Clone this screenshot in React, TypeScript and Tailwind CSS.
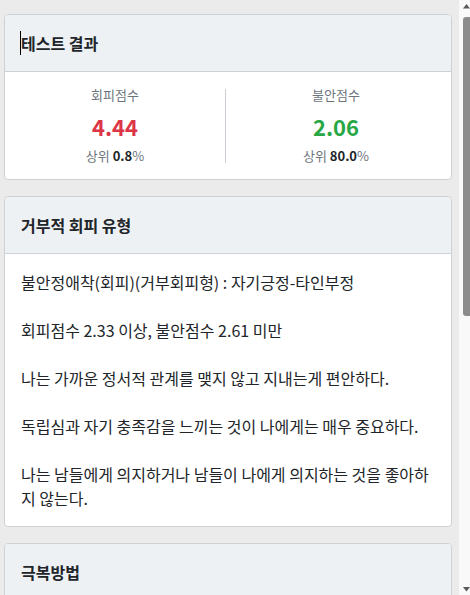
import React from "react";

const font = { fontFamily: '"Noto Sans CJK KR", "Noto Sans", sans-serif' };

function Card({ title, children, caret = false }: { title: string; children: React.ReactNode; caret?: boolean }) {
  return (
    <div className="ml-[4px] mr-[3px] rounded-[4px] border border-[#cdd1d6] bg-white overflow-hidden">
      <div className="bg-[#eef1f4] border-b border-[#cdd1d6] px-4 py-4">
        <h2 className="text-[16px] leading-6 font-bold text-[#212529] flex items-center">
          {caret && <span className="inline-block w-px h-6 bg-black -ml-px" />}
          <span>{title}</span>
        </h2>
      </div>
      {children}
    </div>
  );
}

function Stat({ label, value, color, rank }: { label: string; value: string; color: string; rank: string }) {
  return (
    <div className="flex flex-col items-center">
      <div className="text-[13px] leading-5 text-[#6c757d]">{label}</div>
      <div className={`text-[22px] leading-7 font-bold mt-[7px] ${color}`}>{value}</div>
      <div className="text-[13px] leading-5 text-[#6c757d] mt-[6px]">
        상위 <span className="font-bold text-[#212529]">{rank}</span>%
      </div>
    </div>
  );
}

function Scrollbar() {
  return (
    <div className="w-[15px] shrink-0 h-full">
      <svg width="15" height="595" viewBox="0 0 15 595">
        <rect x="4" y="0" width="11" height="595" fill="#f9f9f9" />
        <polygon points="8,8.5 11.5,4 15,8.5" fill="#5a5a5a" />
        <rect x="8" y="17" width="12" height="299" rx="3" fill="#8c8c8c" />
        <polygon points="8,587 11.5,591.5 15,587" fill="#5a5a5a" />
      </svg>
    </div>
  );
}

export default function App() {
  return (
    <div className="h-screen w-full flex overflow-hidden bg-[#ebebeb]" style={font}>
      <div className="flex-1 min-w-0 overflow-hidden">
        <div className="pt-[14px] pb-[16px] flex flex-col gap-[16px]">
          <Card title="테스트 결과" caret>
            <div className="grid grid-cols-[1fr_1px_1fr] items-center pt-[13px] pb-[13px] pr-[5px]">
              <Stat label="회피점수" value="4.44" color="text-[#dc3545]" rank="0.8" />
              <div className="h-[74px] bg-[#c9ced4]" />
              <Stat label="불안점수" value="2.06" color="text-[#28a745]" rank="80.0" />
            </div>
          </Card>

          <Card title="거부적 회피 유형">
            <div className="px-4 py-4 text-[16px] leading-6 text-[#212529]">
              <p>불안정애착(회피)(거부회피형) : 자기긍정-타인부정</p>
              <br />
              <p>회피점수 2.33 이상, 불안점수 2.61 미만</p>
              <br />
              <p>나는 가까운 정서적 관계를 맺지 않고 지내는게 편안하다.</p>
              <br />
              <p>독립심과 자기 충족감을 느끼는 것이 나에게는 매우 중요하다.</p>
              <br />
              <p>나는 남들에게 의지하거나 남들이 나에게 의지하는 것을 좋아하지 않는다.</p>
            </div>
          </Card>

          <Card title="극복방법">
            <div className="px-4 py-4 text-[16px] leading-6 text-[#212529]">
              <p>자신의 감정을 인식하고 표현하는 연습을 해보세요.</p>
              <br />
              <p>가까운 사람에게 조금씩 마음을 열고 도움을 요청해 보는 것도 좋습니다.</p>
            </div>
          </Card>
        </div>
      </div>
      <Scrollbar />
    </div>
  );
}
